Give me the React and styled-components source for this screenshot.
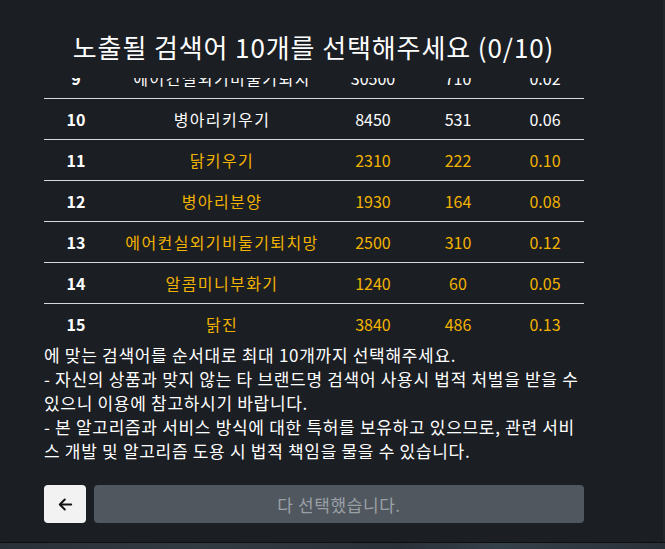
import React, { useEffect, useRef } from 'react';
import styled, { createGlobalStyle } from 'styled-components';

const GlobalStyle = createGlobalStyle`
  html, body {
    margin: 0;
    padding: 0;
    background: #1b1e23;
  }
  body {
    font-family: "Noto Sans CJK KR", "Noto Sans", sans-serif;
  }
  * { box-sizing: border-box; }
`;

const Page = styled.div`
  width: 665px;
  height: 549px;
  display: flex;
  flex-direction: column;
  overflow: hidden;
`;

const Sheet = styled.div`
  height: 542px;
  background: #1b1e23;
  border-right: 2px solid #22262b;
  padding: 0 79px 0 44px;
  display: flex;
  flex-direction: column;
`;

const Title = styled.h2`
  margin: 0 -79px 0 -44px;
  padding-top: 28px;
  padding-right: 36px;
  height: 78px;
  color: #fff;
  font-size: 26px;
  font-weight: 400;
  letter-spacing: 0.9px;
  line-height: 38px;
  text-align: center;
  white-space: nowrap;
`;

const Scroller = styled.div`
  height: 260px;
  overflow: hidden;
`;

const Row = styled.div`
  display: grid;
  grid-template-columns: 64px 228px 74px 96px 78px;
  height: 41px;
  align-items: center;
  border-bottom: 1px solid #d9d9d9;
  color: ${(p) => (p.$hot ? '#f2b300' : '#ffffff')};
  font-size: 16px;
  text-align: center;
`;

const Num = styled.div`
  color: #fff;
  font-weight: 700;
`;

const Cell = styled.div`
  white-space: nowrap;
  letter-spacing: ${(p) => (p.$wide ? '1.4px' : '0')};
`;

const Notice = styled.div`
  margin-top: 5px;
  color: #fff;
  font-size: 17px;
  letter-spacing: 0.7px;
  line-height: 24px;
  white-space: nowrap;
`;

const Actions = styled.div`
  margin-top: 22px;
  display: flex;
  gap: 8px;
`;

const BackButton = styled.button`
  width: 42px;
  height: 38px;
  border: none;
  border-radius: 4px;
  background: #f2f2f2;
  display: flex;
  align-items: center;
  justify-content: center;
  padding: 0;
`;

const DoneButton = styled.button`
  flex: 1;
  height: 38px;
  border: none;
  border-radius: 4px;
  background: #50575f;
  color: #9ba0a6;
  font-family: inherit;
  font-size: 17px;
  letter-spacing: 0.6px;
`;

const BottomBar = styled.div`
  flex: 1;
  border-top: 1px solid #0d0f12;
  background: linear-gradient(90deg, #2a3038, #323a42 30%, #2a3038 60%, #34404a 75%, #2a3038);
`;

const rows = [
  [1, '닭장', 12400, 1520, 0.12, false],
  [2, '병아리', 9800, 902, 0.09, false],
  [3, '닭사료', 7600, 640, 0.08, false],
  [4, '비둘기퇴치', 15300, 1210, 0.08, false],
  [5, '닭모이', 4300, 380, 0.09, false],
  [6, '부화기', 6200, 450, 0.07, false],
  [7, '병아리사료', 3900, 270, 0.07, false],
  [8, '계란부화기', 5100, 330, 0.06, false],
  [9, '에어컨실외기비둘기퇴치', 30500, 710, 0.02, false],
  [10, '병아리키우기', 8450, 531, 0.06, false],
  [11, '닭키우기', 2310, 222, 0.1, true],
  [12, '병아리분양', 1930, 164, 0.08, true],
  [13, '에어컨실외기비둘기퇴치망', 2500, 310, 0.12, true],
  [14, '알콤미니부화기', 1240, 60, 0.05, true],
  [15, '닭진', 3840, 486, 0.13, true],
];

const ArrowLeft = () => (
  <svg width="17" height="17" viewBox="0 0 24 24" fill="none" stroke="#111" strokeWidth="2.8" strokeLinecap="round" strokeLinejoin="round">
    <path d="M20 12H5" />
    <path d="M11 5l-7 7 7 7" />
  </svg>
);

export default function App() {
  const scrollRef = useRef(null);

  useEffect(() => {
    if (scrollRef.current) scrollRef.current.scrollTop = 348;
  }, []);

  return (
    <Page>
      <GlobalStyle />
      <Sheet>
        <Title>노출될 검색어 10개를 선택해주세요 (0/10)</Title>
        <Scroller ref={scrollRef}>
          {rows.map(([n, kw, vol, clicks, rate, hot]) => (
            <Row key={n} $hot={hot}>
              <Num>{n}</Num>
              <Cell $wide>{kw}</Cell>
              <Cell>{vol}</Cell>
              <Cell>{clicks}</Cell>
              <Cell>{rate.toFixed(2)}</Cell>
            </Row>
          ))}
        </Scroller>
        <Notice>
          에 맞는 검색어를 순서대로 최대 10개까지 선택해주세요.<br />
          - 자신의 상품과 맞지 않는 타 브랜드명 검색어 사용시 법적 처벌을 받을 수<br />
          있으니 이용에 참고하시기 바랍니다.<br />
          - 본 알고리즘과 서비스 방식에 대한 특허를 보유하고 있으므로, 관련 서비<br />
          스 개발 및 알고리즘 도용 시 법적 책임을 물을 수 있습니다.
        </Notice>
        <Actions>
          <BackButton><ArrowLeft /></BackButton>
          <DoneButton disabled>다 선택했습니다.</DoneButton>
        </Actions>
      </Sheet>
      <BottomBar />
    </Page>
  );
}
